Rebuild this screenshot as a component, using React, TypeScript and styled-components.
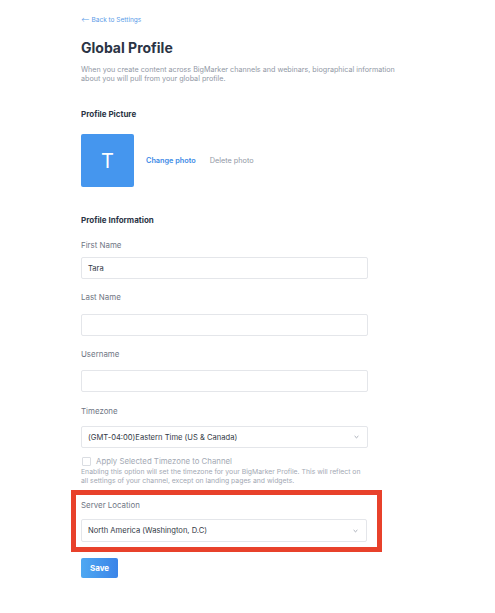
import React from 'react';
import styled, { createGlobalStyle } from 'styled-components';

const GlobalStyle = createGlobalStyle`
  body {
    margin: 0;
    background: #ffffff;
    font-family: Inter, "Open Sans", sans-serif;
  }
`;

const Page = styled.div`
  width: 287px;
  padding: 15px 0 30px 81px;
  display: flex;
  flex-direction: column;
`;

const BackLink = styled.a`
  font-size: 6.5px;
  line-height: 10px;
  color: #5b9ce8;
  text-decoration: none;
`;

const Title = styled.h1`
  margin: 13px 0 0 0;
  font-size: 14px;
  line-height: 20px;
  font-weight: 700;
  color: #2b3445;
`;

const Description = styled.p`
  margin: 7px 0 0 0;
  width: 330px;
  font-size: 7.2px;
  line-height: 9px;
  color: #9198a5;
`;

const SectionTitle = styled.h2<{ $top: number }>`
  margin: ${(p) => p.$top}px 0 0 0;
  font-size: 8px;
  line-height: 12px;
  font-weight: 700;
  color: #2b3445;
`;

const PhotoRow = styled.div`
  margin-top: 14px;
  display: flex;
  align-items: center;
`;

const Avatar = styled.div`
  width: 53px;
  height: 53px;
  border-radius: 2px;
  background: #4596ee;
  color: #ffffff;
  font-size: 20px;
  display: flex;
  align-items: center;
  justify-content: center;
`;

const PhotoLink = styled.span<{ $primary?: boolean }>`
  margin-left: ${(p) => (p.$primary ? '12px' : '14px')};
  font-size: 7.3px;
  font-weight: ${(p) => (p.$primary ? 600 : 400)};
  color: ${(p) => (p.$primary ? '#3b89e6' : '#9198a5')};
`;

const Field = styled.div<{ $top: number }>`
  margin-top: ${(p) => p.$top}px;
  display: flex;
  flex-direction: column;
`;

const Label = styled.label<{ $gap: number }>`
  font-size: 7.9px;
  line-height: 12px;
  color: #6f7684;
  margin-bottom: ${(p) => p.$gap}px;
`;

const TextInput = styled.div`
  height: 22px;
  box-sizing: border-box;
  border: 1px solid #e4e6ea;
  border-radius: 2px;
  padding: 0 6px;
  display: flex;
  align-items: center;
  font-size: 7.6px;
  color: #333a46;
`;

const Select = styled(TextInput)<{ $h: number }>`
  height: ${(p) => p.$h}px;
  justify-content: space-between;
  padding-right: 8px;
`;

const CheckRow = styled.div`
  margin-top: 8px;
  display: flex;
  align-items: center;
  gap: 5px;
  font-size: 7.8px;
  line-height: 10px;
  color: #a3a9b4;
`;

const Checkbox = styled.span`
  width: 7px;
  height: 7px;
  margin-left: 1px;
  border: 1px solid #dadde2;
  border-radius: 1px;
`;

const Help = styled.p`
  margin: 1px 0 0 0;
  font-size: 6.85px;
  line-height: 9px;
  color: #a3a9b4;
`;

const Highlight = styled.div`
  margin: 5px -14px 0 -10px;
  border: 5px solid #e8412b;
  padding: 4px 10px 5px 5px;
  display: flex;
  flex-direction: column;
`;

const SaveButton = styled.button`
  margin-top: 6px;
  width: 37px;
  height: 20px;
  border: none;
  border-radius: 2px;
  background: linear-gradient(90deg, #4ea8f2, #3a84e8);
  color: #ffffff;
  font-family: inherit;
  font-size: 8px;
  font-weight: 700;
  padding: 0;
`;

const Chevron = () => (
  <svg width="5" height="4" viewBox="0 0 5 4">
    <path d="M0.6 1 L2.5 2.8 L4.4 1" fill="none" stroke="#9ca2ad" strokeWidth="0.9" />
  </svg>
);

const App: React.FC = () => (
  <>
    <GlobalStyle />
    <Page>
      <BackLink href="#">⟵ Back to Settings</BackLink>
      <Title>Global Profile</Title>
      <Description>
        When you create content across BigMarker channels and webinars, biographical information
        <br />
        about you will pull from your global profile.
      </Description>

      <SectionTitle $top={25}>Profile Picture</SectionTitle>
      <PhotoRow>
        <Avatar>T</Avatar>
        <PhotoLink $primary>Change photo</PhotoLink>
        <PhotoLink>Delete photo</PhotoLink>
      </PhotoRow>

      <SectionTitle $top={27}>Profile Information</SectionTitle>
      <Field $top={13}>
        <Label $gap={6}>First Name</Label>
        <TextInput>Tara</TextInput>
      </Field>
      <Field $top={12}>
        <Label $gap={11}>Last Name</Label>
        <TextInput />
      </Field>
      <Field $top={12}>
        <Label $gap={10}>Username</Label>
        <TextInput />
      </Field>
      <Field $top={13}>
        <Label $gap={9}>Timezone</Label>
        <Select $h={22}>
          (GMT-04:00)Eastern Time (US &amp; Canada)
          <Chevron />
        </Select>
      </Field>
      <CheckRow>
        <Checkbox />
        Apply Selected Timezone to Channel
      </CheckRow>
      <Help>
        Enabling this option will set the timezone for your BigMarker Profile. This will reflect on
        <br />
        all settings of your channel, except on landing pages and widgets.
      </Help>

      <Highlight>
        <Label $gap={8}>Server Location</Label>
        <Select $h={23}>
          North America (Washington, D.C)
          <Chevron />
        </Select>
      </Highlight>

      <SaveButton>Save</SaveButton>
    </Page>
  </>
);

export default App;
